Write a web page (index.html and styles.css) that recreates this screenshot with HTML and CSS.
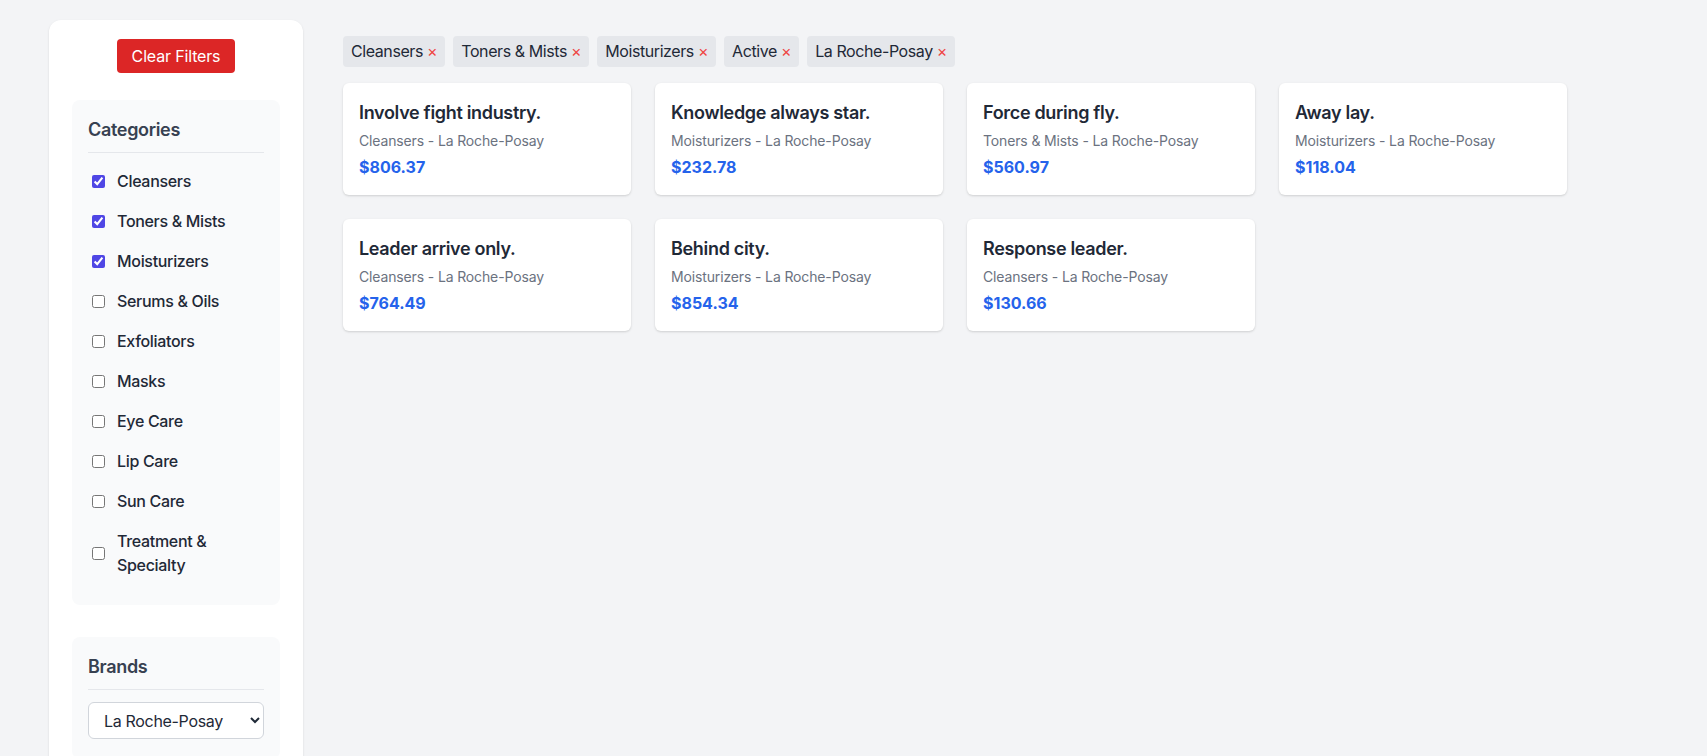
FILE: index.html
```html
<!DOCTYPE html>
<html lang="en">
<head>
<meta charset="utf-8">
<title>Products</title>
<link rel="stylesheet" href="styles.css">
</head>
<body>
<div class="page">
  <aside class="sidebar">
    <div class="clear-wrap"><button class="clear-btn">Clear Filters</button></div>
    <section class="panel">
      <h3 class="panel-title">Categories</h3>
      <ul class="cat-list">
        <li><label class="cat"><input type="checkbox" checked><span>Cleansers</span></label></li>
        <li><label class="cat"><input type="checkbox" checked><span>Toners &amp; Mists</span></label></li>
        <li><label class="cat"><input type="checkbox" checked><span>Moisturizers</span></label></li>
        <li><label class="cat"><input type="checkbox"><span>Serums &amp; Oils</span></label></li>
        <li><label class="cat"><input type="checkbox"><span>Exfoliators</span></label></li>
        <li><label class="cat"><input type="checkbox"><span>Masks</span></label></li>
        <li><label class="cat"><input type="checkbox"><span>Eye Care</span></label></li>
        <li><label class="cat"><input type="checkbox"><span>Lip Care</span></label></li>
        <li><label class="cat"><input type="checkbox"><span>Sun Care</span></label></li>
        <li><label class="cat"><input type="checkbox"><span>Treatment &amp; Specialty</span></label></li>
      </ul>
    </section>
    <section class="panel">
      <h3 class="panel-title">Brands</h3>
      <select class="brand-select">
        <option>La Roche-Posay</option>
      </select>
    </section>
  </aside>
  <main class="main">
    <div class="tags">
      <span class="tag">Cleansers <span class="x">×</span></span>
      <span class="tag">Toners &amp; Mists <span class="x">×</span></span>
      <span class="tag">Moisturizers <span class="x">×</span></span>
      <span class="tag">Active <span class="x">×</span></span>
      <span class="tag">La Roche-Posay <span class="x">×</span></span>
    </div>
    <div class="grid">
      <div class="card"><h4 class="card-title">Involve fight industry.</h4><p class="card-sub">Cleansers - La Roche-Posay</p><p class="price">$806.37</p></div>
      <div class="card"><h4 class="card-title">Knowledge always star.</h4><p class="card-sub">Moisturizers - La Roche-Posay</p><p class="price">$232.78</p></div>
      <div class="card"><h4 class="card-title">Force during fly.</h4><p class="card-sub">Toners &amp; Mists - La Roche-Posay</p><p class="price">$560.97</p></div>
      <div class="card"><h4 class="card-title">Away lay.</h4><p class="card-sub">Moisturizers - La Roche-Posay</p><p class="price">$118.04</p></div>
      <div class="card"><h4 class="card-title">Leader arrive only.</h4><p class="card-sub">Cleansers - La Roche-Posay</p><p class="price">$764.49</p></div>
      <div class="card"><h4 class="card-title">Behind city.</h4><p class="card-sub">Moisturizers - La Roche-Posay</p><p class="price">$854.34</p></div>
      <div class="card"><h4 class="card-title">Response leader.</h4><p class="card-sub">Cleansers - La Roche-Posay</p><p class="price">$130.66</p></div>
    </div>
  </main>
</div>
</body>
</html>
```
FILE: styles.css
```css
* { box-sizing: border-box; }
html, body { margin: 0; padding: 0; }
body {
  background: #f3f4f6;
  font-family: Inter, "Liberation Sans", sans-serif;
  color: #1f2937;
  font-size: 16px;
  line-height: 24px;
  letter-spacing: -0.02em;
  overflow: hidden;
  height: 756px;
}
.page {
  display: flex;
  align-items: flex-start;
  gap: 24px;
  padding: 20px 0 0 49px;
}
.sidebar {
  width: 254px;
  flex: none;
  background: #fff;
  border-radius: 12px;
  box-shadow: 0 1px 3px rgba(0,0,0,0.08), 0 1px 2px rgba(0,0,0,0.04);
  padding: 19px 23px 24px;
}
.clear-wrap { display: flex; justify-content: center; }
.clear-btn {
  background: #dc2626;
  color: #fff;
  border: none;
  border-radius: 4px;
  font-family: inherit;
  font-size: 16px;
  line-height: 24px;
  letter-spacing: -0.01em;
  padding: 5px 15px;
}
.panel {
  background: #f9fafb;
  border-radius: 8px;
  padding: 16px 16px 20px;
  margin-top: 27px;
}
.panel + .panel { margin-top: 32px; }
.panel-title {
  margin: 0;
  font-size: 18px;
  line-height: 28px;
  font-weight: 600;
  color: #374151;
  padding-bottom: 8px;
  border-bottom: 1px solid #e5e7eb;
}
.cat-list { list-style: none; margin: 8px 0 0; padding: 0; }
.cat-list li { padding: 8px 0; }
.cat { display: flex; align-items: center; font-weight: 450; color: #1f2937; }
.cat input {
  width: 13px; height: 13px;
  margin: 3px 12px 3px 4px;
  flex: none;
  accent-color: #4f46e5;
}
.brand-select {
  display: block;
  width: 100%;
  margin-top: 12px;
  height: 37px;
  padding: 0 8px 0 11px;
  border: 1px solid #d1d5db;
  border-radius: 6px;
  background: #fff;
  font-family: inherit;
  font-size: 16px;
  letter-spacing: -0.02em;
  color: #1f2937;
}
.main { flex: 1; padding: 16px; }
.tags { display: flex; flex-wrap: wrap; gap: 8px; }
.tag {
  background: #e5e7eb;
  border-radius: 4px;
  padding: 4px 8px;
  line-height: 23px;
  letter-spacing: -0.026em;
  color: #1f2937;
}
.x { color: #ef4444; }
.grid {
  margin-top: 16px;
  display: grid;
  grid-template-columns: repeat(4, 288px);
  gap: 24px;
}
.card {
  background: #fff;
  border-radius: 6px;
  box-shadow: 0 1px 3px rgba(0,0,0,0.1), 0 1px 2px rgba(0,0,0,0.06);
  padding: 16px;
}
.card-title { margin: 0; font-size: 18px; line-height: 28px; font-weight: 600; color: #1f2937; }
.card-sub { margin: 4px 0 0; font-size: 14px; line-height: 20px; color: #6b7280; letter-spacing: -0.01em; }
.price { margin: 4px 0 0; font-size: 16px; line-height: 24px; font-weight: 700; color: #2563eb; letter-spacing: 0; }
```
